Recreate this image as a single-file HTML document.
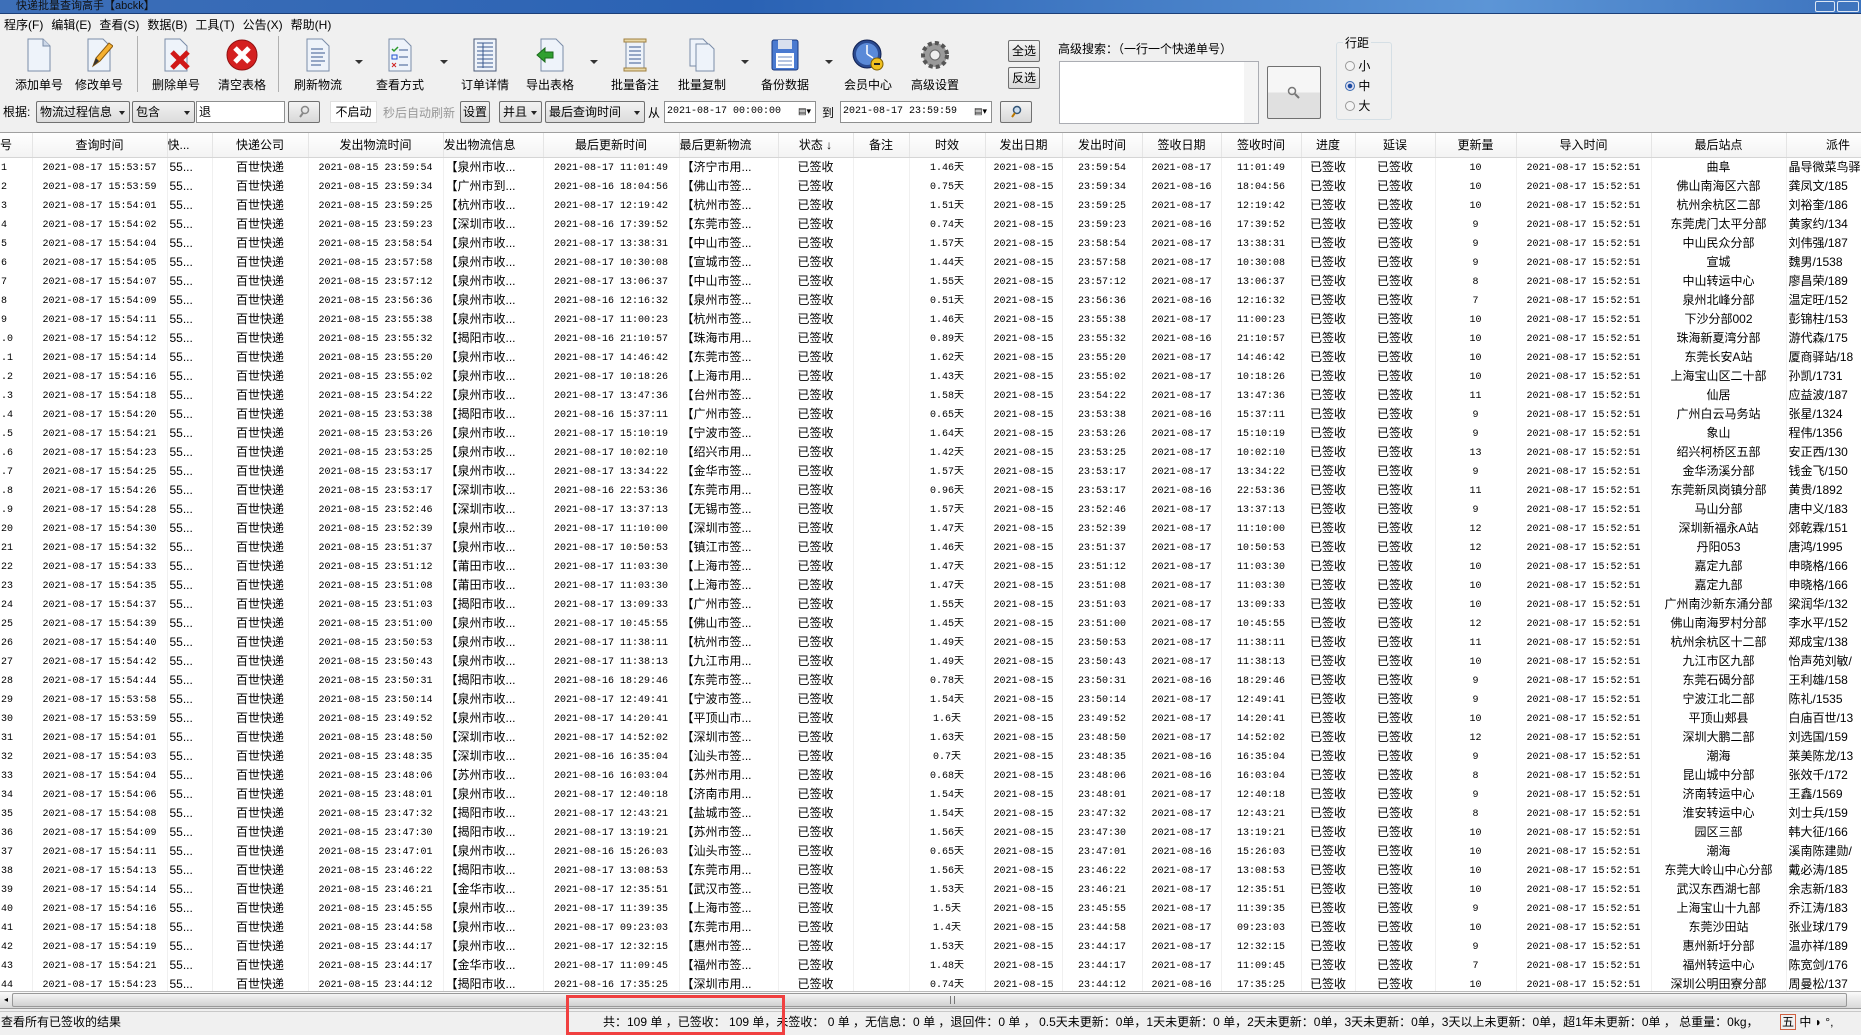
<!DOCTYPE html>
<html><head><meta charset="utf-8">
<style>
*{box-sizing:border-box;margin:0;padding:0}
body{width:1861px;height:1032px;overflow:hidden;background:#f0f0f0;font-family:"Liberation Sans","Noto Sans CJK SC",sans-serif;font-size:12px;color:#000;position:relative}
.a{position:absolute}
.title{left:0;top:0;width:1861px;height:14px;background:linear-gradient(90deg,#3d6fb8,#2a62b4 40%,#5c95d6 80%,#3d74bf);border-bottom:1px solid #1c3f78}
.title span{position:absolute;left:16px;top:0;font-size:11px;line-height:13px;color:#111}
.menu{left:0;top:15px;width:1861px;height:21px;background:#f0f0f0}
.menu span{margin-left:4px;margin-right:4px;font-size:12px;line-height:20px}
.tb{top:38px;text-align:center;width:66px;font-size:12px}
.tb svg{display:block;margin:0 auto 4px}
.sep{top:36px;width:1px;height:56px;background:#b0b0b0}
.arr{top:60px;width:0;height:0;border-left:4px solid transparent;border-right:4px solid transparent;border-top:4px solid #333}
.box{border:1px solid #8e8f8f;background:#fff;height:22px;top:101px;font-size:12px;line-height:20px;padding-left:2px}
.sel{border:1px solid #707070;background:linear-gradient(#f2f2f2,#dcdcdc);height:22px;top:101px;line-height:20px;padding-left:3px;border-radius:2px}
.sel:after{content:"";position:absolute;right:4px;top:9px;border-left:3.5px solid transparent;border-right:3.5px solid transparent;border-top:4px solid #222}
.btn{border:1px solid #707070;background:linear-gradient(#f4f4f4,#d8d8d8);border-radius:2px;text-align:center}
.grid{left:0;top:132px;width:1861px;height:859px;background:#fff;overflow:hidden;border-top:1px solid #a0a0a0}
table{border-collapse:collapse;table-layout:fixed;width:1890px}
th{height:24px;font-weight:normal;font-size:12px;background:linear-gradient(#fff,#f3f3f3);border-right:1px solid #e5e5e5;border-bottom:1px solid #d5d5d5;white-space:nowrap;overflow:hidden}
td{height:19px;line-height:16px;padding:3px 2px 0;vertical-align:top;font-family:"Liberation Mono","Noto Sans CJK SC",monospace;font-size:10px;text-align:center;border-right:1px solid #f0f0f0;white-space:nowrap;overflow:hidden}
td.c,td.l{font-family:"Liberation Sans","Noto Sans CJK SC",sans-serif;font-size:12px;line-height:18px;padding-top:0}
td.l{text-align:left}
td:first-child{text-align:left;padding-left:1px}
.hs{left:0;top:991px;width:1861px;height:18px;background:linear-gradient(#fafafa,#d8d8d8);border-top:1px solid #bbb;border-bottom:1px solid #999}
.status{left:0;top:1011px;width:1861px;height:21px;background:#f0f0f0;border-top:1px solid #c8c8c8;font-size:12px;line-height:20px}
</style></head><body>
<div class="a title"><span>快递批量查询高手【abckk】</span>
<div class="a" style="right:26px;top:1px;width:20px;height:11px;border:1px solid #dce6f4;border-radius:2px;background:#3f75be"></div>
<div class="a" style="right:2px;top:1px;width:22px;height:11px;border:1px solid #dce6f4;border-radius:2px;background:#3f75be"></div></div>
<div class="a menu"><span>程序(F)</span><span>编辑(E)</span><span>查看(S)</span><span>数据(B)</span><span>工具(T)</span><span>公告(X)</span><span>帮助(H)</span></div>

<div class="a tb" style="left:6px"><svg width="28" height="34"><path d="M3 1h15l7 7v25H3z" fill="#eef3fa" stroke="#7a8ca8"/><path d="M18 1v7h7" fill="#cdd8e8" stroke="#7a8ca8"/></svg>添加单号</div>
<div class="a tb" style="left:66px"><svg width="28" height="34"><path d="M3 1h15l7 7v25H3z" fill="#eef3fa" stroke="#7a8ca8"/><path d="M8 28l3-8 13-15 4 3-13 15z" fill="#f5b030" stroke="#8a5a10"/><path d="M8 28l3-8 3 3z" fill="#333"/></svg>修改单号</div>
<div class="a sep" style="left:137px"></div>
<div class="a tb" style="left:143px"><svg width="28" height="34"><path d="M3 1h15l7 7v25H3z" fill="#eef3fa" stroke="#7a8ca8"/><path d="M10 14l16 16M26 14L10 30" stroke="#d01818" stroke-width="5"/></svg>删除单号</div>
<div class="a tb" style="left:209px"><svg width="34" height="34"><circle cx="17" cy="17" r="15" fill="#d42020" stroke="#901010"/><path d="M10 10l14 14M24 10L10 24" stroke="#fff" stroke-width="5"/></svg>清空表格</div>
<div class="a sep" style="left:278px"></div>
<div class="a tb" style="left:285px"><svg width="28" height="34"><path d="M3 1h15l7 7v25H3z" fill="#eef3fa" stroke="#7a8ca8"/><path d="M7 11h12M7 15h14M7 19h12M7 23h14M7 27h10" stroke="#3a5a90"/></svg>刷新物流</div>
<div class="a arr" style="left:355px"></div>
<div class="a tb" style="left:367px"><svg width="28" height="34"><path d="M3 1h15l7 7v25H3z" fill="#eef3fa" stroke="#7a8ca8"/><path d="M6 11l2 2 4-4" stroke="#2a9a2a" fill="none" stroke-width="1.5"/><rect x="6" y="17" width="5" height="4" fill="none" stroke="#2050d0"/><path d="M6 25l4 4M10 25l-4 4" stroke="#d02020"/><path d="M13 12h9M13 19h9M13 27h9" stroke="#3a5a90"/></svg>查看方式</div>
<div class="a arr" style="left:440px"></div>
<div class="a tb" style="left:452px"><svg width="28" height="34"><rect x="3" y="1" width="22" height="32" fill="#eef3fa" stroke="#4a5a78"/><path d="M6 5h16M6 9h16M6 13h16M6 17h16M6 21h16M6 25h16M6 29h16M12 5v25" stroke="#3a5a90"/></svg>订单详情</div>
<div class="a tb" style="left:517px"><svg width="28" height="34"><path d="M5 1h15l7 7v25H5z" fill="#eef3fa" stroke="#7a8ca8"/><path d="M1 17l8-7v4h8v6H9v4z" fill="#30a030" stroke="#1a6a1a"/></svg>导出表格</div>
<div class="a arr" style="left:590px"></div>
<div class="a tb" style="left:602px"><svg width="28" height="34"><rect x="5" y="3" width="18" height="29" fill="#eef3fa" stroke="#7a8ca8"/><rect x="3" y="1" width="22" height="3" fill="#e8d8a8" stroke="#a08040"/><rect x="3" y="30" width="22" height="3" fill="#e8d8a8" stroke="#a08040"/><path d="M8 9h12M8 13h12M8 17h12M8 21h12M8 25h12" stroke="#3a5a90"/></svg>批量备注</div>
<div class="a tb" style="left:669px"><svg width="28" height="34"><path d="M2 1h13l5 5v22H2z" fill="#eef3fa" stroke="#7a8ca8"/><path d="M8 6h13l5 5v22H8z" fill="#eef3fa" stroke="#7a8ca8"/></svg>批量复制</div>
<div class="a arr" style="left:741px"></div>
<div class="a tb" style="left:752px"><svg width="30" height="34"><rect x="2" y="2" width="26" height="30" rx="2" fill="#4a7ad0" stroke="#1a3a80"/><rect x="8" y="2" width="14" height="9" fill="#d8e0ee"/><rect x="6" y="15" width="18" height="15" fill="#fff"/><path d="M8 19h14M8 23h14M8 27h14" stroke="#6a8ac0"/></svg>备份数据</div>
<div class="a arr" style="left:825px"></div>
<div class="a tb" style="left:835px"><svg width="34" height="34"><circle cx="16" cy="16" r="14" fill="#2a4a90" stroke="#102050"/><circle cx="16" cy="16" r="11" fill="#5a8ad8"/><path d="M16 16V7M16 16l6 4" stroke="#fff" stroke-width="1.5"/><circle cx="26" cy="26" r="6" fill="#f0c020" stroke="#806000"/><path d="M23 26h6" stroke="#222" stroke-width="2"/></svg>会员中心</div>
<div class="a tb" style="left:902px"><svg width="32" height="34"><circle cx="16" cy="17" r="12" fill="#9a9a9a" stroke="#555" stroke-width="4" stroke-dasharray="4 3"/><circle cx="16" cy="17" r="5" fill="#eee" stroke="#666"/></svg>高级设置</div>

<div class="a btn" style="left:1008px;top:40px;width:32px;height:22px;line-height:20px">全选</div>
<div class="a btn" style="left:1008px;top:67px;width:32px;height:22px;line-height:20px">反选</div>
<div class="a" style="left:1058px;top:40px;font-size:12px">高级搜索：（一行一个快递单号）</div>
<div class="a" style="left:1059px;top:61px;width:200px;height:63px;background:#fff;border:1px solid #abadb3"><div class="a" style="right:0;top:0;width:14px;height:61px;background:#f4f4f4"></div></div>
<div class="a btn" style="left:1267px;top:66px;width:54px;height:53px;background:linear-gradient(#f6f6f6 50%,#e0e0e0 50%)"><svg width="14" height="14" style="margin-top:19px"><circle cx="5" cy="5" r="3.5" fill="none" stroke="#777" stroke-width="1.5"/><path d="M8 8l4 4" stroke="#777" stroke-width="2"/></svg></div>
<div class="a" style="left:1336px;top:42px;width:56px;height:78px;border:1px solid #d5dfe5;border-radius:3px"></div>
<div class="a" style="left:1343px;top:34px;background:#f0f0f0;padding:0 2px">行距</div>
<div class="a" style="left:1345px;top:59px;line-height:14px"><div><span style="display:inline-block;width:10px;height:10px;border:1px solid #999;border-radius:50%;background:#f4f4f4;vertical-align:-1px"></span> 小</div><div style="margin-top:6px"><span style="display:inline-block;width:10px;height:10px;border:1px solid #3a6ab0;border-radius:50%;background:radial-gradient(#1a4aa0 35%,#dde 45%);vertical-align:-1px"></span> 中</div><div style="margin-top:6px"><span style="display:inline-block;width:10px;height:10px;border:1px solid #999;border-radius:50%;background:#f4f4f4;vertical-align:-1px"></span> 大</div></div>

<div class="a" style="left:3px;top:103px">根据:</div>
<div class="a sel" style="left:36px;width:94px">物流过程信息</div>
<div class="a sel" style="left:132px;width:63px">包含</div>
<div class="a box" style="left:196px;width:89px">退</div>
<div class="a btn" style="left:288px;top:101px;width:32px;height:22px"><svg width="12" height="14" style="margin-top:3px"><circle cx="7" cy="5" r="3.5" fill="none" stroke="#888" stroke-width="1.5"/><path d="M5 8l-3 4" stroke="#888" stroke-width="2"/></svg></div>
<div class="a box" style="left:330px;width:47px;border-color:#e0e0e0;text-align:center;padding:0">不启动</div>
<div class="a" style="left:383px;top:104px;color:#999">秒后自动刷新</div>
<div class="a btn" style="left:460px;top:101px;width:30px;height:22px;line-height:20px">设置</div>
<div class="a sel" style="left:499px;width:43px">并且</div>
<div class="a sel" style="left:545px;width:100px">最后查询时间</div>
<div class="a" style="left:648px;top:104px">从</div>
<div class="a box" style="left:664px;width:152px;font-family:'Liberation Mono',monospace;font-size:10px">2021-08-17 00:00:00<span class="a" style="right:4px;top:0;font-size:9px">▤▾</span></div>
<div class="a" style="left:822px;top:104px">到</div>
<div class="a box" style="left:840px;width:152px;font-family:'Liberation Mono',monospace;font-size:10px">2021-08-17 23:59:59<span class="a" style="right:4px;top:0;font-size:9px">▤▾</span></div>
<div class="a btn" style="left:1000px;top:101px;width:32px;height:22px"><svg width="12" height="14" style="margin-top:3px"><circle cx="7" cy="5" r="3.5" fill="#cde" stroke="#357" stroke-width="1.5"/><path d="M5 8l-3 4" stroke="#b70" stroke-width="2"/></svg></div>

<div class="a grid"><table>
<colgroup><col style="width:32px"><col style="width:135px"><col style="width:45px"><col style="width:96px"><col style="width:135px"><col style="width:100px"><col style="width:136px"><col style="width:99px"><col style="width:75px"><col style="width:56px"><col style="width:76px"><col style="width:77px"><col style="width:80px"><col style="width:79px"><col style="width:80px"><col style="width:54px"><col style="width:80px"><col style="width:81px"><col style="width:135px"><col style="width:135px"><col style="width:104px"></colgroup>
<tr><th style="text-align:left">号</th><th>查询时间</th><th style="text-align:left">快...</th><th>快递公司</th><th>发出物流时间</th><th style="text-align:left">发出物流信息</th><th>最后更新时间</th><th style="text-align:left">最后更新物流</th><th>状态 ↓</th><th>备注</th><th>时效</th><th>发出日期</th><th>发出时间</th><th>签收日期</th><th>签收时间</th><th>进度</th><th>延误</th><th>更新量</th><th>导入时间</th><th>最后站点</th><th>派件</th></tr>
<tr><td>1<td>2021-08-17 15:53:57<td class="l">55...<td class="c">百世快递<td>2021-08-15 23:59:54<td class="l">【泉州市收...<td>2021-08-17 11:01:49<td class="l">【济宁市用...<td class="c">已签收<td><td>1.46天<td>2021-08-15<td>23:59:54<td>2021-08-17<td>11:01:49<td class="c">已签收<td class="c">已签收<td>10<td>2021-08-17 15:52:51<td class="c">曲阜<td class="l">晶导微菜鸟驿</tr>
<tr><td>2<td>2021-08-17 15:53:59<td class="l">55...<td class="c">百世快递<td>2021-08-15 23:59:34<td class="l">【广州市到...<td>2021-08-16 18:04:56<td class="l">【佛山市签...<td class="c">已签收<td><td>0.75天<td>2021-08-15<td>23:59:34<td>2021-08-16<td>18:04:56<td class="c">已签收<td class="c">已签收<td>10<td>2021-08-17 15:52:51<td class="c">佛山南海区六部<td class="l">龚凤文/185</tr>
<tr><td>3<td>2021-08-17 15:54:01<td class="l">55...<td class="c">百世快递<td>2021-08-15 23:59:25<td class="l">【杭州市收...<td>2021-08-17 12:19:42<td class="l">【杭州市签...<td class="c">已签收<td><td>1.51天<td>2021-08-15<td>23:59:25<td>2021-08-17<td>12:19:42<td class="c">已签收<td class="c">已签收<td>10<td>2021-08-17 15:52:51<td class="c">杭州余杭区二部<td class="l">刘裕奎/186</tr>
<tr><td>4<td>2021-08-17 15:54:02<td class="l">55...<td class="c">百世快递<td>2021-08-15 23:59:23<td class="l">【深圳市收...<td>2021-08-16 17:39:52<td class="l">【东莞市签...<td class="c">已签收<td><td>0.74天<td>2021-08-15<td>23:59:23<td>2021-08-16<td>17:39:52<td class="c">已签收<td class="c">已签收<td>9<td>2021-08-17 15:52:51<td class="c">东莞虎门太平分部<td class="l">黄家约/134</tr>
<tr><td>5<td>2021-08-17 15:54:04<td class="l">55...<td class="c">百世快递<td>2021-08-15 23:58:54<td class="l">【泉州市收...<td>2021-08-17 13:38:31<td class="l">【中山市签...<td class="c">已签收<td><td>1.57天<td>2021-08-15<td>23:58:54<td>2021-08-17<td>13:38:31<td class="c">已签收<td class="c">已签收<td>9<td>2021-08-17 15:52:51<td class="c">中山民众分部<td class="l">刘伟强/187</tr>
<tr><td>6<td>2021-08-17 15:54:05<td class="l">55...<td class="c">百世快递<td>2021-08-15 23:57:58<td class="l">【泉州市收...<td>2021-08-17 10:30:08<td class="l">【宣城市签...<td class="c">已签收<td><td>1.44天<td>2021-08-15<td>23:57:58<td>2021-08-17<td>10:30:08<td class="c">已签收<td class="c">已签收<td>9<td>2021-08-17 15:52:51<td class="c">宣城<td class="l">魏男/1538</tr>
<tr><td>7<td>2021-08-17 15:54:07<td class="l">55...<td class="c">百世快递<td>2021-08-15 23:57:12<td class="l">【泉州市收...<td>2021-08-17 13:06:37<td class="l">【中山市签...<td class="c">已签收<td><td>1.55天<td>2021-08-15<td>23:57:12<td>2021-08-17<td>13:06:37<td class="c">已签收<td class="c">已签收<td>8<td>2021-08-17 15:52:51<td class="c">中山转运中心<td class="l">廖昌荣/189</tr>
<tr><td>8<td>2021-08-17 15:54:09<td class="l">55...<td class="c">百世快递<td>2021-08-15 23:56:36<td class="l">【泉州市收...<td>2021-08-16 12:16:32<td class="l">【泉州市签...<td class="c">已签收<td><td>0.51天<td>2021-08-15<td>23:56:36<td>2021-08-16<td>12:16:32<td class="c">已签收<td class="c">已签收<td>7<td>2021-08-17 15:52:51<td class="c">泉州北峰分部<td class="l">温定旺/152</tr>
<tr><td>9<td>2021-08-17 15:54:11<td class="l">55...<td class="c">百世快递<td>2021-08-15 23:55:38<td class="l">【泉州市收...<td>2021-08-17 11:00:23<td class="l">【杭州市签...<td class="c">已签收<td><td>1.46天<td>2021-08-15<td>23:55:38<td>2021-08-17<td>11:00:23<td class="c">已签收<td class="c">已签收<td>10<td>2021-08-17 15:52:51<td class="c">下沙分部002<td class="l">彭锦柱/153</tr>
<tr><td>.0<td>2021-08-17 15:54:12<td class="l">55...<td class="c">百世快递<td>2021-08-15 23:55:32<td class="l">【揭阳市收...<td>2021-08-16 21:10:57<td class="l">【珠海市用...<td class="c">已签收<td><td>0.89天<td>2021-08-15<td>23:55:32<td>2021-08-16<td>21:10:57<td class="c">已签收<td class="c">已签收<td>10<td>2021-08-17 15:52:51<td class="c">珠海新夏湾分部<td class="l">游代森/175</tr>
<tr><td>.1<td>2021-08-17 15:54:14<td class="l">55...<td class="c">百世快递<td>2021-08-15 23:55:20<td class="l">【泉州市收...<td>2021-08-17 14:46:42<td class="l">【东莞市签...<td class="c">已签收<td><td>1.62天<td>2021-08-15<td>23:55:20<td>2021-08-17<td>14:46:42<td class="c">已签收<td class="c">已签收<td>10<td>2021-08-17 15:52:51<td class="c">东莞长安A站<td class="l">厦商驿站/18</tr>
<tr><td>.2<td>2021-08-17 15:54:16<td class="l">55...<td class="c">百世快递<td>2021-08-15 23:55:02<td class="l">【泉州市收...<td>2021-08-17 10:18:26<td class="l">【上海市用...<td class="c">已签收<td><td>1.43天<td>2021-08-15<td>23:55:02<td>2021-08-17<td>10:18:26<td class="c">已签收<td class="c">已签收<td>10<td>2021-08-17 15:52:51<td class="c">上海宝山区二十部<td class="l">孙凯/1731</tr>
<tr><td>.3<td>2021-08-17 15:54:18<td class="l">55...<td class="c">百世快递<td>2021-08-15 23:54:22<td class="l">【泉州市收...<td>2021-08-17 13:47:36<td class="l">【台州市签...<td class="c">已签收<td><td>1.58天<td>2021-08-15<td>23:54:22<td>2021-08-17<td>13:47:36<td class="c">已签收<td class="c">已签收<td>11<td>2021-08-17 15:52:51<td class="c">仙居<td class="l">应益波/187</tr>
<tr><td>.4<td>2021-08-17 15:54:20<td class="l">55...<td class="c">百世快递<td>2021-08-15 23:53:38<td class="l">【揭阳市收...<td>2021-08-16 15:37:11<td class="l">【广州市签...<td class="c">已签收<td><td>0.65天<td>2021-08-15<td>23:53:38<td>2021-08-16<td>15:37:11<td class="c">已签收<td class="c">已签收<td>9<td>2021-08-17 15:52:51<td class="c">广州白云马务站<td class="l">张星/1324</tr>
<tr><td>.5<td>2021-08-17 15:54:21<td class="l">55...<td class="c">百世快递<td>2021-08-15 23:53:26<td class="l">【泉州市收...<td>2021-08-17 15:10:19<td class="l">【宁波市签...<td class="c">已签收<td><td>1.64天<td>2021-08-15<td>23:53:26<td>2021-08-17<td>15:10:19<td class="c">已签收<td class="c">已签收<td>9<td>2021-08-17 15:52:51<td class="c">象山<td class="l">程伟/1356</tr>
<tr><td>.6<td>2021-08-17 15:54:23<td class="l">55...<td class="c">百世快递<td>2021-08-15 23:53:25<td class="l">【泉州市收...<td>2021-08-17 10:02:10<td class="l">【绍兴市用...<td class="c">已签收<td><td>1.42天<td>2021-08-15<td>23:53:25<td>2021-08-17<td>10:02:10<td class="c">已签收<td class="c">已签收<td>13<td>2021-08-17 15:52:51<td class="c">绍兴柯桥区五部<td class="l">安正西/130</tr>
<tr><td>.7<td>2021-08-17 15:54:25<td class="l">55...<td class="c">百世快递<td>2021-08-15 23:53:17<td class="l">【泉州市收...<td>2021-08-17 13:34:22<td class="l">【金华市签...<td class="c">已签收<td><td>1.57天<td>2021-08-15<td>23:53:17<td>2021-08-17<td>13:34:22<td class="c">已签收<td class="c">已签收<td>9<td>2021-08-17 15:52:51<td class="c">金华汤溪分部<td class="l">钱金飞/150</tr>
<tr><td>.8<td>2021-08-17 15:54:26<td class="l">55...<td class="c">百世快递<td>2021-08-15 23:53:17<td class="l">【深圳市收...<td>2021-08-16 22:53:36<td class="l">【东莞市用...<td class="c">已签收<td><td>0.96天<td>2021-08-15<td>23:53:17<td>2021-08-16<td>22:53:36<td class="c">已签收<td class="c">已签收<td>11<td>2021-08-17 15:52:51<td class="c">东莞新凤岗镇分部<td class="l">黄贵/1892</tr>
<tr><td>.9<td>2021-08-17 15:54:28<td class="l">55...<td class="c">百世快递<td>2021-08-15 23:52:46<td class="l">【深圳市收...<td>2021-08-17 13:37:13<td class="l">【无锡市签...<td class="c">已签收<td><td>1.57天<td>2021-08-15<td>23:52:46<td>2021-08-17<td>13:37:13<td class="c">已签收<td class="c">已签收<td>9<td>2021-08-17 15:52:51<td class="c">马山分部<td class="l">唐中义/183</tr>
<tr><td>20<td>2021-08-17 15:54:30<td class="l">55...<td class="c">百世快递<td>2021-08-15 23:52:39<td class="l">【泉州市收...<td>2021-08-17 11:10:00<td class="l">【深圳市签...<td class="c">已签收<td><td>1.47天<td>2021-08-15<td>23:52:39<td>2021-08-17<td>11:10:00<td class="c">已签收<td class="c">已签收<td>12<td>2021-08-17 15:52:51<td class="c">深圳新福永A站<td class="l">郊乾霖/151</tr>
<tr><td>21<td>2021-08-17 15:54:32<td class="l">55...<td class="c">百世快递<td>2021-08-15 23:51:37<td class="l">【泉州市收...<td>2021-08-17 10:50:53<td class="l">【镇江市签...<td class="c">已签收<td><td>1.46天<td>2021-08-15<td>23:51:37<td>2021-08-17<td>10:50:53<td class="c">已签收<td class="c">已签收<td>12<td>2021-08-17 15:52:51<td class="c">丹阳053<td class="l">唐鸿/1995</tr>
<tr><td>22<td>2021-08-17 15:54:33<td class="l">55...<td class="c">百世快递<td>2021-08-15 23:51:12<td class="l">【莆田市收...<td>2021-08-17 11:03:30<td class="l">【上海市签...<td class="c">已签收<td><td>1.47天<td>2021-08-15<td>23:51:12<td>2021-08-17<td>11:03:30<td class="c">已签收<td class="c">已签收<td>10<td>2021-08-17 15:52:51<td class="c">嘉定九部<td class="l">申晓格/166</tr>
<tr><td>23<td>2021-08-17 15:54:35<td class="l">55...<td class="c">百世快递<td>2021-08-15 23:51:08<td class="l">【莆田市收...<td>2021-08-17 11:03:30<td class="l">【上海市签...<td class="c">已签收<td><td>1.47天<td>2021-08-15<td>23:51:08<td>2021-08-17<td>11:03:30<td class="c">已签收<td class="c">已签收<td>10<td>2021-08-17 15:52:51<td class="c">嘉定九部<td class="l">申晓格/166</tr>
<tr><td>24<td>2021-08-17 15:54:37<td class="l">55...<td class="c">百世快递<td>2021-08-15 23:51:03<td class="l">【揭阳市收...<td>2021-08-17 13:09:33<td class="l">【广州市签...<td class="c">已签收<td><td>1.55天<td>2021-08-15<td>23:51:03<td>2021-08-17<td>13:09:33<td class="c">已签收<td class="c">已签收<td>10<td>2021-08-17 15:52:51<td class="c">广州南沙新东涌分部<td class="l">梁润华/132</tr>
<tr><td>25<td>2021-08-17 15:54:39<td class="l">55...<td class="c">百世快递<td>2021-08-15 23:51:00<td class="l">【泉州市收...<td>2021-08-17 10:45:55<td class="l">【佛山市签...<td class="c">已签收<td><td>1.45天<td>2021-08-15<td>23:51:00<td>2021-08-17<td>10:45:55<td class="c">已签收<td class="c">已签收<td>12<td>2021-08-17 15:52:51<td class="c">佛山南海罗村分部<td class="l">李水平/152</tr>
<tr><td>26<td>2021-08-17 15:54:40<td class="l">55...<td class="c">百世快递<td>2021-08-15 23:50:53<td class="l">【泉州市收...<td>2021-08-17 11:38:11<td class="l">【杭州市签...<td class="c">已签收<td><td>1.49天<td>2021-08-15<td>23:50:53<td>2021-08-17<td>11:38:11<td class="c">已签收<td class="c">已签收<td>11<td>2021-08-17 15:52:51<td class="c">杭州余杭区十二部<td class="l">郑成宝/138</tr>
<tr><td>27<td>2021-08-17 15:54:42<td class="l">55...<td class="c">百世快递<td>2021-08-15 23:50:43<td class="l">【泉州市收...<td>2021-08-17 11:38:13<td class="l">【九江市用...<td class="c">已签收<td><td>1.49天<td>2021-08-15<td>23:50:43<td>2021-08-17<td>11:38:13<td class="c">已签收<td class="c">已签收<td>10<td>2021-08-17 15:52:51<td class="c">九江市区九部<td class="l">怡声苑刘敏/</tr>
<tr><td>28<td>2021-08-17 15:54:44<td class="l">55...<td class="c">百世快递<td>2021-08-15 23:50:31<td class="l">【揭阳市收...<td>2021-08-16 18:29:46<td class="l">【东莞市签...<td class="c">已签收<td><td>0.78天<td>2021-08-15<td>23:50:31<td>2021-08-16<td>18:29:46<td class="c">已签收<td class="c">已签收<td>9<td>2021-08-17 15:52:51<td class="c">东莞石碣分部<td class="l">王利雄/158</tr>
<tr><td>29<td>2021-08-17 15:53:58<td class="l">55...<td class="c">百世快递<td>2021-08-15 23:50:14<td class="l">【泉州市收...<td>2021-08-17 12:49:41<td class="l">【宁波市签...<td class="c">已签收<td><td>1.54天<td>2021-08-15<td>23:50:14<td>2021-08-17<td>12:49:41<td class="c">已签收<td class="c">已签收<td>9<td>2021-08-17 15:52:51<td class="c">宁波江北二部<td class="l">陈礼/1535</tr>
<tr><td>30<td>2021-08-17 15:53:59<td class="l">55...<td class="c">百世快递<td>2021-08-15 23:49:52<td class="l">【泉州市收...<td>2021-08-17 14:20:41<td class="l">【平顶山市...<td class="c">已签收<td><td>1.6天<td>2021-08-15<td>23:49:52<td>2021-08-17<td>14:20:41<td class="c">已签收<td class="c">已签收<td>10<td>2021-08-17 15:52:51<td class="c">平顶山郏县<td class="l">白庙百世/13</tr>
<tr><td>31<td>2021-08-17 15:54:01<td class="l">55...<td class="c">百世快递<td>2021-08-15 23:48:50<td class="l">【深圳市收...<td>2021-08-17 14:52:02<td class="l">【深圳市签...<td class="c">已签收<td><td>1.63天<td>2021-08-15<td>23:48:50<td>2021-08-17<td>14:52:02<td class="c">已签收<td class="c">已签收<td>12<td>2021-08-17 15:52:51<td class="c">深圳大鹏二部<td class="l">刘选国/159</tr>
<tr><td>32<td>2021-08-17 15:54:03<td class="l">55...<td class="c">百世快递<td>2021-08-15 23:48:35<td class="l">【深圳市收...<td>2021-08-16 16:35:04<td class="l">【汕头市签...<td class="c">已签收<td><td>0.7天<td>2021-08-15<td>23:48:35<td>2021-08-16<td>16:35:04<td class="c">已签收<td class="c">已签收<td>9<td>2021-08-17 15:52:51<td class="c">潮海<td class="l">莱美陈龙/13</tr>
<tr><td>33<td>2021-08-17 15:54:04<td class="l">55...<td class="c">百世快递<td>2021-08-15 23:48:06<td class="l">【苏州市收...<td>2021-08-16 16:03:04<td class="l">【苏州市用...<td class="c">已签收<td><td>0.68天<td>2021-08-15<td>23:48:06<td>2021-08-16<td>16:03:04<td class="c">已签收<td class="c">已签收<td>8<td>2021-08-17 15:52:51<td class="c">昆山城中分部<td class="l">张效千/172</tr>
<tr><td>34<td>2021-08-17 15:54:06<td class="l">55...<td class="c">百世快递<td>2021-08-15 23:48:01<td class="l">【泉州市收...<td>2021-08-17 12:40:18<td class="l">【济南市用...<td class="c">已签收<td><td>1.54天<td>2021-08-15<td>23:48:01<td>2021-08-17<td>12:40:18<td class="c">已签收<td class="c">已签收<td>9<td>2021-08-17 15:52:51<td class="c">济南转运中心<td class="l">王鑫/1569</tr>
<tr><td>35<td>2021-08-17 15:54:08<td class="l">55...<td class="c">百世快递<td>2021-08-15 23:47:32<td class="l">【揭阳市收...<td>2021-08-17 12:43:21<td class="l">【盐城市签...<td class="c">已签收<td><td>1.54天<td>2021-08-15<td>23:47:32<td>2021-08-17<td>12:43:21<td class="c">已签收<td class="c">已签收<td>8<td>2021-08-17 15:52:51<td class="c">淮安转运中心<td class="l">刘士兵/159</tr>
<tr><td>36<td>2021-08-17 15:54:09<td class="l">55...<td class="c">百世快递<td>2021-08-15 23:47:30<td class="l">【揭阳市收...<td>2021-08-17 13:19:21<td class="l">【苏州市签...<td class="c">已签收<td><td>1.56天<td>2021-08-15<td>23:47:30<td>2021-08-17<td>13:19:21<td class="c">已签收<td class="c">已签收<td>10<td>2021-08-17 15:52:51<td class="c">园区三部<td class="l">韩大征/166</tr>
<tr><td>37<td>2021-08-17 15:54:11<td class="l">55...<td class="c">百世快递<td>2021-08-15 23:47:01<td class="l">【泉州市收...<td>2021-08-16 15:26:03<td class="l">【汕头市签...<td class="c">已签收<td><td>0.65天<td>2021-08-15<td>23:47:01<td>2021-08-16<td>15:26:03<td class="c">已签收<td class="c">已签收<td>10<td>2021-08-17 15:52:51<td class="c">潮海<td class="l">溪南陈建勋/</tr>
<tr><td>38<td>2021-08-17 15:54:13<td class="l">55...<td class="c">百世快递<td>2021-08-15 23:46:22<td class="l">【揭阳市收...<td>2021-08-17 13:08:53<td class="l">【东莞市用...<td class="c">已签收<td><td>1.56天<td>2021-08-15<td>23:46:22<td>2021-08-17<td>13:08:53<td class="c">已签收<td class="c">已签收<td>10<td>2021-08-17 15:52:51<td class="c">东莞大岭山中心分部<td class="l">戴必涛/185</tr>
<tr><td>39<td>2021-08-17 15:54:14<td class="l">55...<td class="c">百世快递<td>2021-08-15 23:46:21<td class="l">【金华市收...<td>2021-08-17 12:35:51<td class="l">【武汉市签...<td class="c">已签收<td><td>1.53天<td>2021-08-15<td>23:46:21<td>2021-08-17<td>12:35:51<td class="c">已签收<td class="c">已签收<td>10<td>2021-08-17 15:52:51<td class="c">武汉东西湖七部<td class="l">余志新/183</tr>
<tr><td>40<td>2021-08-17 15:54:16<td class="l">55...<td class="c">百世快递<td>2021-08-15 23:45:55<td class="l">【泉州市收...<td>2021-08-17 11:39:35<td class="l">【上海市签...<td class="c">已签收<td><td>1.5天<td>2021-08-15<td>23:45:55<td>2021-08-17<td>11:39:35<td class="c">已签收<td class="c">已签收<td>9<td>2021-08-17 15:52:51<td class="c">上海宝山十九部<td class="l">乔江涛/183</tr>
<tr><td>41<td>2021-08-17 15:54:18<td class="l">55...<td class="c">百世快递<td>2021-08-15 23:44:58<td class="l">【泉州市收...<td>2021-08-17 09:23:03<td class="l">【东莞市用...<td class="c">已签收<td><td>1.4天<td>2021-08-15<td>23:44:58<td>2021-08-17<td>09:23:03<td class="c">已签收<td class="c">已签收<td>10<td>2021-08-17 15:52:51<td class="c">东莞沙田站<td class="l">张业球/179</tr>
<tr><td>42<td>2021-08-17 15:54:19<td class="l">55...<td class="c">百世快递<td>2021-08-15 23:44:17<td class="l">【泉州市收...<td>2021-08-17 12:32:15<td class="l">【惠州市签...<td class="c">已签收<td><td>1.53天<td>2021-08-15<td>23:44:17<td>2021-08-17<td>12:32:15<td class="c">已签收<td class="c">已签收<td>9<td>2021-08-17 15:52:51<td class="c">惠州新圩分部<td class="l">温亦祥/189</tr>
<tr><td>43<td>2021-08-17 15:54:21<td class="l">55...<td class="c">百世快递<td>2021-08-15 23:44:17<td class="l">【金华市收...<td>2021-08-17 11:09:45<td class="l">【福州市签...<td class="c">已签收<td><td>1.48天<td>2021-08-15<td>23:44:17<td>2021-08-17<td>11:09:45<td class="c">已签收<td class="c">已签收<td>7<td>2021-08-17 15:52:51<td class="c">福州转运中心<td class="l">陈宽剑/176</tr>
<tr><td>44<td>2021-08-17 15:54:23<td class="l">55...<td class="c">百世快递<td>2021-08-15 23:44:12<td class="l">【揭阳市收...<td>2021-08-16 17:35:25<td class="l">【深圳市用...<td class="c">已签收<td><td>0.74天<td>2021-08-15<td>23:44:12<td>2021-08-16<td>17:35:25<td class="c">已签收<td class="c">已签收<td>10<td>2021-08-17 15:52:51<td class="c">深圳公明田寮分部<td class="l">周曼松/137</tr>
</table></div>
<div class="a hs"><div class="a" style="left:0;top:0;width:12px;height:16px;font-size:8px;line-height:16px;text-align:center">◂</div><div class="a" style="left:12px;top:1px;width:1835px;height:14px;border:1px solid #999;border-radius:2px;background:linear-gradient(#f4f4f4,#d0d0d0)"></div><div class="a" style="left:950px;top:4px;width:5px;height:8px;border-left:1px solid #777;border-right:1px solid #777"></div></div>
<div class="a status"><span style="position:absolute;left:1px">查看所有已签收的结果</span><span style="position:absolute;left:603px;white-space:nowrap">共：109 单 ，已签收： 109 单，未签收： 0 单 ，无信息：0 单 ，退回件：0 单 ， 0.5天未更新：0单，1天未更新：0 单，2天未更新：0单，3天未更新：0单，3天以上未更新：0单，超1年未更新：0单 ， 总重量：0kg，</span>
<div class="a" style="left:1780px;top:0;width:81px;height:20px;background:#f0f0f0;font-size:12px"><span style="border:1px solid #d06040;padding:0 1px">五</span> 中 ◗ °,</div></div>
<div class="a" style="left:566px;top:995px;width:219px;height:40px;border:3px solid #f04040"></div>
</body></html>
